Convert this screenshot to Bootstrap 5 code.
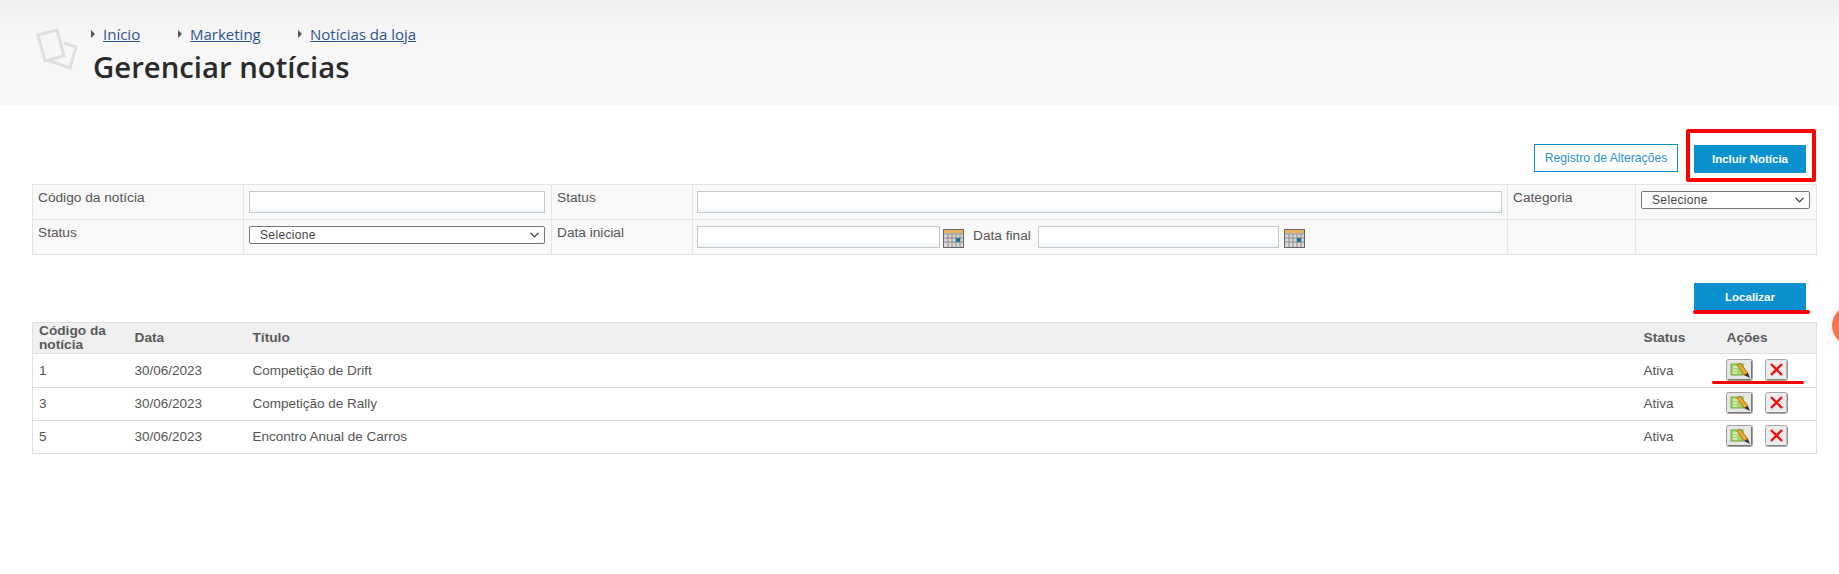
<!DOCTYPE html>
<html lang="pt-BR">
<head>
<meta charset="utf-8">
<title>Gerenciar notícias</title>
<link href="https://cdn.jsdelivr.net/npm/bootstrap@5.3.0/dist/css/bootstrap.min.css" rel="stylesheet">
<style>
html,body{height:574px;overflow:hidden;}
body{font-family:"Liberation Sans",Arial,sans-serif;font-size:14px;color:#555;background:#fff;position:relative;}
.topo{height:105px;background:linear-gradient(#f0f0f0,#f7f7f7 35%,#f7f7f7);padding:0 0 0 36px;}
.topo-logo{margin-top:28px;flex:none;}
.topo-txt{margin-left:17px;padding-top:23px;}
.migalhas{font-family:"Open Sans",sans-serif;font-size:15px;line-height:22px;height:22px;margin-left:-3px;}
.migalhas a{color:#2c5390;text-decoration:underline;}
.migalhas span{display:inline-flex;align-items:center;}
.seta{width:0;height:0;border-left:4px solid #555;border-top:4px solid transparent;border-bottom:4px solid transparent;margin-right:8px;}
.m1{width:87px;}.m2{width:120px;}
.titulo{font-family:"Open Sans",sans-serif;font-weight:600;font-size:29.3px;line-height:38px;color:#2a2a2a;margin:3px 0 0 -1px;}
.area{padding:0 23px 0 32px;}
.barra{padding-top:39px;padding-right:10px;height:79px;}
.btn-azul,.btn-linha{border-radius:0;font-family:"Liberation Sans",sans-serif;line-height:26px;padding:0;height:28px;}
.btn-azul{width:112px;font-size:11.5px;background:#0b90d0;border:1px solid #0b90d0;color:#fff;font-weight:700;}
.btn-azul:hover{background:#0b90d0;color:#fff;}
.btn-linha{width:144px;font-size:12.2px;background:#fff;border:1px solid #0b90d0;color:#2d8fd0;margin-right:16px;}
.barra .btn-azul{margin-top:1px;}
.filtro{width:1784px;table-layout:fixed;margin:0;font-size:13.7px;--bs-table-bg:#f9f9f9;--bs-table-color:#555;--bs-table-border-color:#e4e4e4;}
.filtro td{height:35px;padding:6px 5px 0 4px;vertical-align:top;line-height:18px;}
.filtro td.rot{padding:4px 5px 0 5px;}
.filtro td.cel-estreita{padding:6px 6px 0 5px;}
.caixa{display:block;width:100%;height:22px;border:1px solid #c8c8c8;background:linear-gradient(#fff 70%,#eef5fa);padding:0 4px;border-radius:0;}
.campos{display:flex;align-items:flex-start;}
.data{flex:none;}
.d1{width:243px;}.d2{width:241px;}
.cal{flex:none;margin:3px 0 0 3px;}
.d2 + .cal{margin-left:5px;}
.dfim{margin:1px 7px 0 9px;line-height:18px;white-space:nowrap;}
.filtro .form-select.sel{height:18px;min-height:0;font-family:"Liberation Sans",sans-serif;font-size:12px;line-height:16px;letter-spacing:.35px;color:#444;border:1px solid #767676;border-radius:2px;padding:0 20px 0 10px;background-size:13px 10px;background-position:right 3px center;}
.barra2{padding:28px 10px 0 0;height:67px;}
.lista{width:1784px;table-layout:fixed;margin:0;font-size:13.5px;--bs-table-color:#555;--bs-table-border-color:#e0e0e0;border-left:1px solid #e0e0e0;border-right:1px solid #e0e0e0;}
.lista>:not(caption)>*>*{border-width:0 0 1px 0;padding:0 6px;vertical-align:middle;height:33px;line-height:14px;}
.lista thead th{background:#f0f0f0;--bs-table-bg:#f0f0f0;font-weight:700;height:31px;color:#5a5a5a;font-size:13.7px;}
.lista thead th.th-acoes{padding-left:5px;}
.lista thead tr{border-top:1px solid #e0e0e0;}
.lista tbody tr:first-child td{height:34px;}
.lista td.cel-acoes{padding-left:4px;}
.acoes{display:flex;align-items:center;gap:12px;margin-bottom:2px;}
.ic{display:block;flex:none;}
.marca{position:absolute;background:#f00;border-radius:2px;}
.caixa-red{position:absolute;left:1686px;top:129px;width:130px;height:53px;border:4px solid #f00;border-radius:2px;}
.circ{position:absolute;left:1832px;top:303px;width:50px;height:45px;border-radius:50%;background:#f4754e;box-shadow:0 0 8px 3px #eef1f7;}
</style>
</head>
<body>
<svg width="0" height="0" class="d-none">
  <symbol id="ed" viewBox="0 0 27 22"><rect x=".5" y=".5" width="26" height="21" rx="2" fill="#e6e6e6" stroke="#a0a0a0"/><path d="M2 20.500h23M25.500 2v18" stroke="#777"/><rect x="5" y="5" width="12" height="11" fill="#a6d46c" stroke="#6ea83a"/><path d="M7 8h7M7 11h4M7 14h4" stroke="#fff"/><path d="M11 6l3-2 8 10-4 2z" fill="#e8a92c" stroke="#8a6414" stroke-width=".7"/><path d="M18 16l4-2 2 5z" fill="#333"/></symbol>
  <symbol id="ex" viewBox="0 0 23 22"><rect x=".5" y=".5" width="22" height="21" rx="2" fill="#ececec" stroke="#a8a8a8"/><path d="M2 20.500h19M22 2v18" stroke="#888"/><path d="M6 5l11 11M17 5L6 16" stroke="#f01010" stroke-width="2.400"/></symbol>
  <symbol id="cl" viewBox="0 0 21 19"><rect x=".5" y=".5" width="20" height="18" fill="#d8d8d8" stroke="#666"/><rect x="1" y="1" width="19" height="3" fill="#e8b25a"/><path d="M1 5h19M1 9h19M1 13h19M5 5v13M9 5v13M13 5v13M17 5v13" stroke="#8a8a8a"/><rect x="13" y="9" width="4" height="4" fill="#1d6f9c"/></symbol>
</svg>
<header class="topo d-flex">
  <svg class="topo-logo" width="41" height="42" viewBox="0 0 41 42" fill="none" stroke="#dedede" stroke-width="3">
    <path d="M16 30l-2 3 20 7 6-21-12-4"/>
    <path d="M2 7l19-5 7 26-19 5z" fill="#f6f6f6"/>
  </svg>
  <div class="topo-txt">
    <div class="migalhas d-flex">
      <span class="m1"><i class="seta"></i><a href="#">Início</a></span>
      <span class="m2"><i class="seta"></i><a href="#">Marketing</a></span>
      <span><i class="seta"></i><a href="#">Notícias da loja</a></span>
    </div>
    <h1 class="titulo">Gerenciar notícias</h1>
  </div>
</header>

<main class="area">
  <div class="barra d-flex justify-content-end align-items-start">
    <button type="button" class="btn btn-linha">Registro de Alterações</button>
    <button type="button" class="btn btn-azul">Incluir Notícia</button>
  </div>

  <table class="table table-bordered filtro">
    <colgroup><col style="width:211px"><col style="width:308px"><col style="width:141px"><col style="width:815px"><col style="width:128px"><col style="width:181px"></colgroup>
    <tbody>
      <tr>
        <td class="rot">Código da notícia</td>
        <td class="cel-estreita"><input type="text" class="caixa" aria-label="Código da notícia"></td>
        <td class="rot">Status</td>
        <td><input type="text" class="caixa" aria-label="Status"></td>
        <td class="rot">Categoria</td>
        <td class="cel-estreita"><select class="form-select sel" aria-label="Categoria"><option>Selecione</option></select></td>
      </tr>
      <tr>
        <td class="rot">Status</td>
        <td class="cel-estreita"><select class="form-select sel" aria-label="Status"><option>Selecione</option></select></td>
        <td class="rot">Data inicial</td>
        <td>
          <div class="campos">
            <input type="text" class="caixa data d1" aria-label="Data inicial">
            <svg class="cal" width="21" height="19"><use href="#cl"/></svg>
            <span class="dfim">Data final</span>
            <input type="text" class="caixa data d2" aria-label="Data final">
            <svg class="cal" width="21" height="19"><use href="#cl"/></svg>
          </div>
        </td>
        <td></td>
        <td></td>
      </tr>
    </tbody>
  </table>

  <div class="barra2 d-flex justify-content-end align-items-start">
    <button type="button" class="btn btn-azul">Localizar</button>
  </div>

  <table class="table lista">
    <colgroup><col style="width:96px"><col style="width:118px"><col style="width:1391px"><col style="width:84px"><col style="width:95px"></colgroup>
    <thead>
      <tr><th>Código da notícia</th><th>Data</th><th>Título</th><th>Status</th><th class="th-acoes">Ações</th></tr>
    </thead>
    <tbody>
      <tr><td>1</td><td>30/06/2023</td><td>Competição de Drift</td><td>Ativa</td><td class="cel-acoes"><div class="acoes"><svg class="ic" width="27" height="22"><use href="#ed"/></svg><svg class="ic" width="23" height="22"><use href="#ex"/></svg></div></td></tr>
      <tr><td>3</td><td>30/06/2023</td><td>Competição de Rally</td><td>Ativa</td><td class="cel-acoes"><div class="acoes"><svg class="ic" width="27" height="22"><use href="#ed"/></svg><svg class="ic" width="23" height="22"><use href="#ex"/></svg></div></td></tr>
      <tr><td>5</td><td>30/06/2023</td><td>Encontro Anual de Carros</td><td>Ativa</td><td class="cel-acoes"><div class="acoes"><svg class="ic" width="27" height="22"><use href="#ed"/></svg><svg class="ic" width="23" height="22"><use href="#ex"/></svg></div></td></tr>
    </tbody>
  </table>
</main>

<div class="caixa-red"></div>
<div class="marca" style="left:1693px;top:310px;width:117px;height:4px"></div>
<div class="marca" style="left:1712px;top:381px;width:92px;height:3px"></div>
<div class="circ"></div>
<script src="https://cdn.jsdelivr.net/npm/bootstrap@5.3.0/dist/js/bootstrap.bundle.min.js"></script>
</body>
</html>
